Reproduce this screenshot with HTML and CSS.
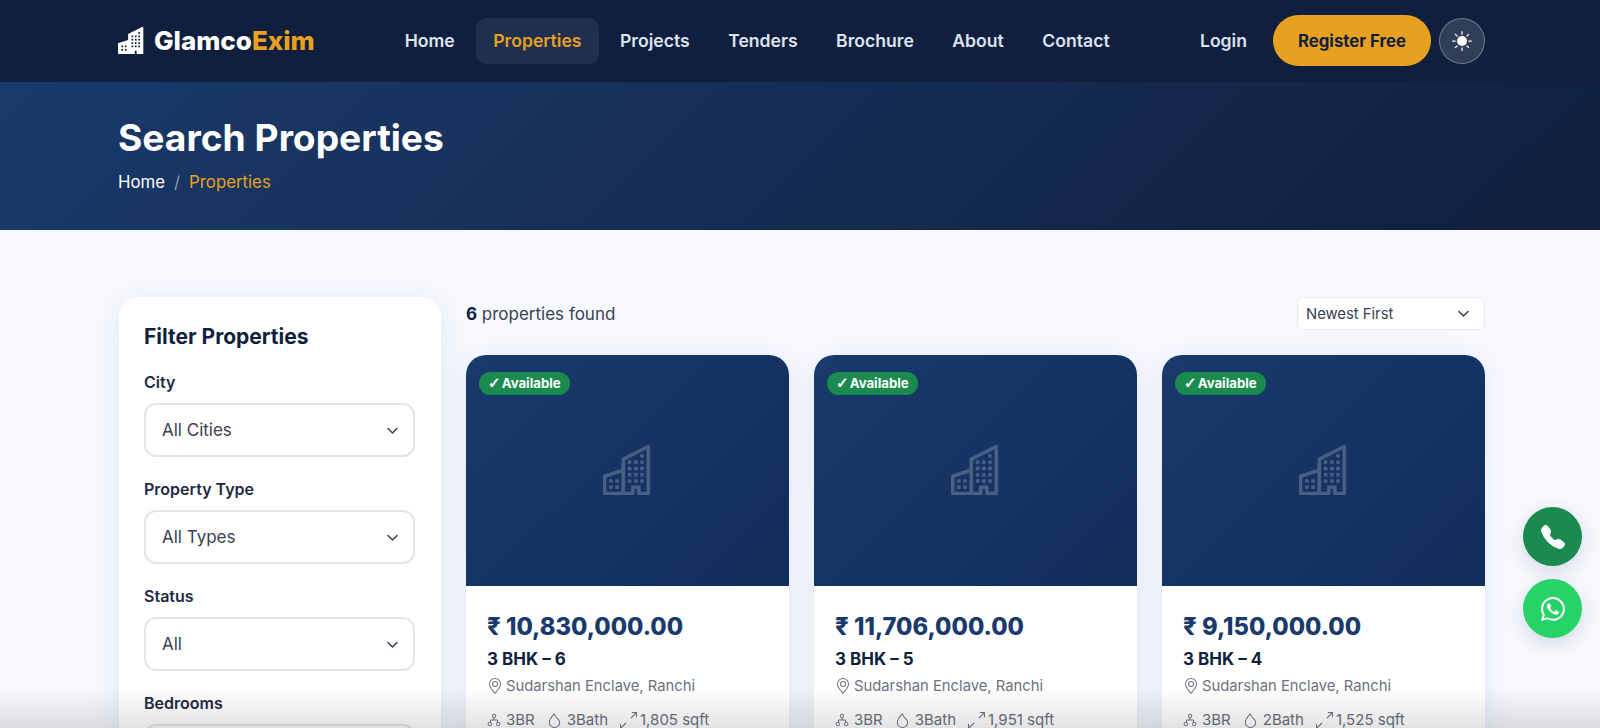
FILE: index.html
```html
<!DOCTYPE html>
<html lang="en">
<head>
    <meta charset="UTF-8">
    <meta name="viewport" content="width=device-width, initial-scale=1.0">
    <title>Search Properties - GlamcoExim</title>
    <link rel="stylesheet" href="styles.css">
</head>
<body>
    <svg class="sprites" width="0" height="0">
        <symbol id="buildings" viewBox="0 0 16 16">
            <path d="M14.763.075A.5.5 0 0 1 15 .5v15a.5.5 0 0 1-.5.5h-3a.5.5 0 0 1-.5-.5V14h-1v1.5a.5.5 0 0 1-.5.5h-9a.5.5 0 0 1-.5-.5V10a.5.5 0 0 1 .342-.474L6 7.64V4.5a.5.5 0 0 1 .276-.447l8-4a.5.5 0 0 1 .487.022ZM6 8.694 1 10.36V15h5V8.694ZM7 15h2v-1.5a.5.5 0 0 1 .5-.5h2a.5.5 0 0 1 .5.5V15h2V1.309l-7 3.5V15Z"/>
            <path d="M2 11h1v1H2v-1Zm2 0h1v1H4v-1Zm-2 2h1v1H2v-1Zm2 0h1v1H4v-1Zm4-4h1v1H8V9Zm2 0h1v1h-1V9Zm-2 2h1v1H8v-1Zm2 0h1v1h-1v-1Zm2-2h1v1h-1V9Zm0 2h1v1h-1v-1ZM8 7h1v1H8V7Zm2 0h1v1h-1V7Zm2 0h1v1h-1V7ZM8 5h1v1H8V5Zm2 0h1v1h-1V5Zm2 0h1v1h-1V5Zm0-2h1v1h-1V3Z"/>
        </symbol>
        <symbol id="chevron" viewBox="0 0 16 16">
            <path d="M2.5 5.5 8 11l5.5-5.5" fill="none" stroke="currentColor" stroke-width="1.8" stroke-linecap="round" stroke-linejoin="round"/>
        </symbol>
        <symbol id="pin" viewBox="0 0 16 16">
            <path d="M12.166 8.94c-.524 1.062-1.234 2.12-1.96 3.07A31.493 31.493 0 0 1 8 14.58a31.481 31.481 0 0 1-2.206-2.57c-.726-.95-1.436-2.008-1.96-3.07C3.304 7.867 3 6.862 3 6a5 5 0 0 1 10 0c0 .862-.305 1.867-.834 2.94zM8 16s6-5.686 6-10A6 6 0 0 0 2 6c0 4.314 6 10 6 10z"/>
            <path d="M8 8a2 2 0 1 1 0-4 2 2 0 0 1 0 4zm0 1a3 3 0 1 0 0-6 3 3 0 0 0 0 6z"/>
        </symbol>
        <symbol id="rooms" viewBox="0 0 16 16">
            <g fill="none" stroke="currentColor" stroke-width="1.1">
                <circle cx="8" cy="3.4" r="2"/>
                <circle cx="3.2" cy="12.6" r="2"/>
                <circle cx="12.8" cy="12.6" r="2"/>
                <path d="M8 5.4V8M4 10.7V8h8v2.7"/>
            </g>
        </symbol>
        <symbol id="droplet" viewBox="0 0 16 16">
            <path fill-rule="evenodd" d="M7.21.8C7.69.295 8 0 8 0c.109.363.234.708.371 1.038.812 1.946 2.073 3.35 3.197 4.6C12.878 7.096 14 8.345 14 10a6 6 0 0 1-12 0C2 6.668 5.58 2.517 7.21.8zm.413 1.021A31.25 31.25 0 0 0 5.794 3.99c-.726.95-1.436 2.008-1.96 3.07C3.304 8.133 3 9.138 3 10a5 5 0 0 0 10 0c0-1.201-.796-2.157-2.181-3.7l-.03-.032C9.75 5.11 8.5 3.72 7.623 1.82z"/>
        </symbol>
        <symbol id="expand" viewBox="0 0 16 16">
            <path fill-rule="evenodd" d="M5.828 10.172a.5.5 0 0 0-.707 0l-4.096 4.096V11.5a.5.5 0 0 0-1 0v3.975a.5.5 0 0 0 .5.5H4.5a.5.5 0 0 0 0-1H1.732l4.096-4.096a.5.5 0 0 0 0-.707zm4.344-4.344a.5.5 0 0 0 .707 0l4.096-4.096V4.5a.5.5 0 1 0 1 0V.525a.5.5 0 0 0-.5-.5H11.5a.5.5 0 0 0 0 1h2.768l-4.096 4.096a.5.5 0 0 0 0 .707z"/>
        </symbol>
    </svg>

    <header class="navbar">
        <a class="brand" href="#">
            <svg class="brand-icon" viewBox="0 0 16 16" fill="currentColor"><path d="M15 .5a.5.5 0 0 0-.724-.447l-8 4A.5.5 0 0 0 6 4.5v3.14L.342 9.526A.5.5 0 0 0 0 10v5.5a.5.5 0 0 0 .5.5h9a.5.5 0 0 0 .5-.5V14h1v1.5a.5.5 0 0 0 .5.5h3a.5.5 0 0 0 .5-.5V.5ZM2 11h1v1H2v-1Zm2 0h1v1H4v-1Zm-1 2v1H2v-1h1Zm1 0h1v1H4v-1Zm9-10v1h-1V3h1ZM8 5h1v1H8V5Zm1 2v1H8V7h1ZM8 9h1v1H8V9Zm2 0h1v1h-1V9Zm-1 2v1H8v-1h1Zm1 0h1v1h-1v-1Zm3-2v1h-1V9h1Zm-1 2h1v1h-1v-1Zm-2-4h1v1h-1V7Zm3 0v1h-1V7h1Zm-2-2v1h-1V5h1Zm1 0h1v1h-1V5Z"/></svg>
            <span>Glamco<em>Exim</em></span>
        </a>
        <nav class="nav-links">
            <a href="#">Home</a>
            <a href="#" class="active">Properties</a>
            <a href="#">Projects</a>
            <a href="#">Tenders</a>
            <a href="#">Brochure</a>
            <a href="#">About</a>
            <a href="#">Contact</a>
        </nav>
        <div class="nav-actions">
            <a href="#" class="login">Login</a>
            <a href="#" class="register">Register Free</a>
            <button class="theme-toggle" aria-label="Toggle theme">
                <svg viewBox="0 0 16 16" fill="currentColor"><path d="M8 12a4 4 0 1 0 0-8 4 4 0 0 0 0 8zM8 0a.5.5 0 0 1 .5.5v2a.5.5 0 0 1-1 0v-2A.5.5 0 0 1 8 0zm0 13a.5.5 0 0 1 .5.5v2a.5.5 0 0 1-1 0v-2A.5.5 0 0 1 8 13zm8-5a.5.5 0 0 1-.5.5h-2a.5.5 0 0 1 0-1h2a.5.5 0 0 1 .5.5zM3 8a.5.5 0 0 1-.5.5h-2a.5.5 0 0 1 0-1h2A.5.5 0 0 1 3 8zm10.657-5.657a.5.5 0 0 1 0 .707l-1.414 1.415a.5.5 0 1 1-.707-.708l1.414-1.414a.5.5 0 0 1 .707 0zm-9.193 9.193a.5.5 0 0 1 0 .707L3.05 13.657a.5.5 0 0 1-.707-.707l1.414-1.414a.5.5 0 0 1 .707 0zm9.193 2.121a.5.5 0 0 1-.707 0l-1.414-1.414a.5.5 0 0 1 .707-.707l1.414 1.414a.5.5 0 0 1 0 .707zM4.464 4.465a.5.5 0 0 1-.707 0L2.343 3.05a.5.5 0 1 1 .707-.707l1.414 1.414a.5.5 0 0 1 0 .708z"/></svg>
            </button>
        </div>
    </header>

    <section class="hero">
        <h1>Search Properties</h1>
        <div class="breadcrumb">
            <a href="#">Home</a>
            <span class="sep">/</span>
            <span class="current">Properties</span>
        </div>
    </section>

    <main class="content">
        <aside class="filters">
            <h2>Filter Properties</h2>
            <div class="field">
                <label>City</label>
                <div class="select">All Cities <svg><use href="#chevron"/></svg></div>
            </div>
            <div class="field">
                <label>Property Type</label>
                <div class="select">All Types <svg><use href="#chevron"/></svg></div>
            </div>
            <div class="field">
                <label>Status</label>
                <div class="select">All <svg><use href="#chevron"/></svg></div>
            </div>
            <div class="field">
                <label>Bedrooms</label>
                <div class="select"></div>
            </div>
        </aside>

        <section class="results">
            <div class="results-head">
                <p><strong>6</strong> properties found</p>
                <div class="sort">Newest First <svg><use href="#chevron"/></svg></div>
            </div>
            <div class="cards">
                <article class="card">
                    <div class="card-img">
                        <span class="badge"><span class="check">✓</span> Available</span>
                        <svg class="card-icon"><use href="#buildings"/></svg>
                    </div>
                    <div class="card-body">
                        <div class="price">₹ 10,830,000.00</div>
                        <h3>3 BHK – 6</h3>
                        <div class="location"><svg><use href="#pin"/></svg>Sudarshan Enclave, Ranchi</div>
                        <div class="meta">
                            <span><svg class="ic-rooms"><use href="#rooms"/></svg>3BR</span>
                            <span><svg class="ic-bath"><use href="#droplet"/></svg>3Bath</span>
                            <span><svg class="ic-area"><use href="#expand"/></svg>1,805 sqft</span>
                        </div>
                    </div>
                </article>
                <article class="card">
                    <div class="card-img">
                        <span class="badge"><span class="check">✓</span> Available</span>
                        <svg class="card-icon"><use href="#buildings"/></svg>
                    </div>
                    <div class="card-body">
                        <div class="price">₹ 11,706,000.00</div>
                        <h3>3 BHK – 5</h3>
                        <div class="location"><svg><use href="#pin"/></svg>Sudarshan Enclave, Ranchi</div>
                        <div class="meta">
                            <span><svg class="ic-rooms"><use href="#rooms"/></svg>3BR</span>
                            <span><svg class="ic-bath"><use href="#droplet"/></svg>3Bath</span>
                            <span><svg class="ic-area"><use href="#expand"/></svg>1,951 sqft</span>
                        </div>
                    </div>
                </article>
                <article class="card">
                    <div class="card-img">
                        <span class="badge"><span class="check">✓</span> Available</span>
                        <svg class="card-icon"><use href="#buildings"/></svg>
                    </div>
                    <div class="card-body">
                        <div class="price">₹ 9,150,000.00</div>
                        <h3>3 BHK – 4</h3>
                        <div class="location"><svg><use href="#pin"/></svg>Sudarshan Enclave, Ranchi</div>
                        <div class="meta">
                            <span><svg class="ic-rooms"><use href="#rooms"/></svg>3BR</span>
                            <span><svg class="ic-bath"><use href="#droplet"/></svg>2Bath</span>
                            <span><svg class="ic-area"><use href="#expand"/></svg>1,525 sqft</span>
                        </div>
                    </div>
                </article>
            </div>
        </section>
    </main>

    <div class="fabs">
        <a href="#" class="fab fab-call" aria-label="Call">
            <svg viewBox="0 0 16 16" fill="currentColor"><path fill-rule="evenodd" d="M1.885.511a1.745 1.745 0 0 1 2.61.163L6.29 2.98c.329.423.445.974.315 1.494l-.547 2.19a.678.678 0 0 0 .178.643l2.457 2.457a.678.678 0 0 0 .644.178l2.189-.547a1.745 1.745 0 0 1 1.494.315l2.306 1.794c.829.645.905 1.87.163 2.611l-1.034 1.034c-.74.74-1.846 1.065-2.877.702a18.634 18.634 0 0 1-7.01-4.42 18.634 18.634 0 0 1-4.42-7.009c-.362-1.03-.037-2.137.703-2.877L1.885.511z"/></svg>
        </a>
        <a href="#" class="fab fab-whatsapp" aria-label="WhatsApp">
            <svg viewBox="0 0 16 16" fill="currentColor"><path d="M13.601 2.326A7.854 7.854 0 0 0 7.994 0C3.627 0 .068 3.558.064 7.926c0 1.399.366 2.76 1.057 3.965L0 16l4.204-1.102a7.933 7.933 0 0 0 3.79.965h.004c4.368 0 7.926-3.558 7.93-7.93A7.898 7.898 0 0 0 13.6 2.326zM7.994 14.521a6.573 6.573 0 0 1-3.356-.92l-.24-.144-2.494.654.666-2.433-.156-.251a6.56 6.56 0 0 1-1.007-3.505c0-3.626 2.957-6.584 6.591-6.584a6.56 6.56 0 0 1 4.66 1.931 6.557 6.557 0 0 1 1.928 4.66c-.004 3.639-2.961 6.592-6.592 6.592zm3.615-4.934c-.197-.099-1.17-.578-1.353-.646-.182-.065-.315-.099-.445.099-.133.197-.513.646-.627.775-.114.133-.232.148-.43.05-.197-.1-.836-.308-1.592-.985-.59-.525-.985-1.175-1.103-1.372-.114-.198-.011-.304.088-.403.087-.088.197-.232.296-.346.1-.114.133-.198.198-.33.065-.134.034-.248-.015-.347-.05-.099-.445-1.076-.612-1.47-.16-.389-.323-.335-.445-.34-.114-.007-.247-.007-.38-.007a.729.729 0 0 0-.529.247c-.182.198-.691.677-.691 1.654 0 .977.71 1.916.81 2.049.098.133 1.394 2.132 3.383 2.992.47.205.84.326 1.129.418.475.152.904.129 1.246.08.38-.058 1.171-.48 1.338-.943.164-.464.164-.86.114-.943-.049-.084-.182-.133-.38-.232z"/></svg>
        </a>
    </div>

    <div class="bottom-fade"></div>
</body>
</html>
```

FILE: styles.css
```css
* {
    box-sizing: border-box;
}
html, body {
    height: 100%;
    overflow: hidden;
}
body {
    margin: 0;
    background: #f8f9ff;
    color: #0f1f3d;
    font-family: Inter, "Noto Sans", sans-serif;
}
a {
    color: inherit;
    text-decoration: none;
}
svg {
    display: block;
}
.sprites {
    position: absolute;
}

/* navbar */
.navbar {
    display: flex;
    align-items: center;
    height: 82px;
    padding: 0 115px 0 118px;
    background: #0f1f3d;
    position: relative;
    z-index: 2;
}
.brand {
    display: flex;
    align-items: center;
    gap: 9px;
    margin-top: -2px;
    color: #fff;
    font-size: 26px;
    font-weight: 800;
}
.brand em {
    color: #e8a020;
    font-style: normal;
}
.brand-icon {
    width: 27px;
    height: 27px;
}
.nav-links {
    display: flex;
    gap: 4.5px;
    margin-left: 73px;
}
.nav-links a {
    padding: 13px 17px;
    border-radius: 10px;
    color: #dde3f0;
    font-size: 17.6px;
    font-weight: 600;
    line-height: 20px;
}
.nav-links a.active {
    background: #1f2f4d;
    color: #e8a020;
}
.nav-actions {
    display: flex;
    align-items: center;
    margin-left: auto;
}
.login {
    margin-right: 26px;
    margin-top: -1px;
    color: #dde3f0;
    font-size: 17.6px;
    font-weight: 600;
}
.register {
    display: flex;
    align-items: center;
    justify-content: center;
    width: 158px;
    height: 51px;
    margin-right: 8px;
    margin-top: -1px;
    border-radius: 26px;
    background: #e8a020;
    color: #0f1f3d;
    font-size: 16.8px;
    font-weight: 700;
}
.theme-toggle {
    display: flex;
    align-items: center;
    justify-content: center;
    width: 46px;
    height: 46px;
    padding: 0;
    border: 1.5px solid rgba(255, 255, 255, 0.3);
    border-radius: 50%;
    background: rgba(255, 255, 255, 0.14);
    color: #fff;
}
.theme-toggle svg {
    width: 20px;
    height: 20px;
}

/* page header */
.hero {
    height: 148px;
    padding: 34px 118px 0;
    background: linear-gradient(135deg, #1a3a6b 0%, #0f1f3d 100%);
    color: #fff;
}
.hero h1 {
    margin: 0 0 11px;
    font-size: 37.2px;
    font-weight: 700;
    line-height: 44px;
}
.breadcrumb {
    display: flex;
    gap: 9px;
    font-size: 16.8px;
    line-height: 22px;
}
.breadcrumb .sep {
    color: rgba(255, 255, 255, 0.5);
}
.breadcrumb .current {
    color: #e8a020;
}

/* filters + results */
.content {
    display: flex;
    align-items: flex-start;
    gap: 25px;
    padding: 67px 115px 0 119px;
}
.filters {
    flex: 0 0 322px;
    padding: 26px 26px 24px 25px;
    border-radius: 20px;
    background: #fff;
    box-shadow: 0 4px 30px rgba(26, 58, 107, 0.09);
}
.filters h2 {
    margin: 0 0 20px;
    font-size: 21px;
    font-weight: 700;
    line-height: 28px;
}
.field {
    margin-bottom: 21px;
}
.field label {
    display: block;
    margin-bottom: 10px;
    font-size: 16px;
    font-weight: 600;
    line-height: 22px;
    color: #1f2a44;
}
.select {
    display: flex;
    align-items: center;
    justify-content: space-between;
    height: 54px;
    padding: 0 14px 0 16px;
    border: 2px solid #dfe5e9;
    border-radius: 12px;
    background: #fff;
    color: #374151;
    font-size: 17px;
}
.select svg, .sort svg {
    width: 13px;
    height: 13px;
    color: #374151;
}
.results {
    flex: 1;
    min-width: 0;
}
.results-head {
    display: flex;
    align-items: center;
    justify-content: space-between;
    height: 33px;
    margin-bottom: 25px;
}
.results-head p {
    margin: 0;
    color: #374151;
    font-size: 17px;
}
.results-head strong {
    color: #0f1f3d;
}
.sort {
    display: flex;
    align-items: center;
    justify-content: space-between;
    width: 188px;
    height: 33px;
    padding: 0 14px 0 8px;
    border: 1px solid #e8eaf0;
    border-radius: 6px;
    background: #fff;
    color: #374151;
    font-size: 14.8px;
}

/* property cards */
.cards {
    display: grid;
    grid-template-columns: repeat(3, 1fr);
    gap: 25px;
}
.card {
    border-radius: 20px;
    background: #fff;
    box-shadow: 0 4px 30px rgba(26, 58, 107, 0.09);
    overflow: hidden;
}
.card-img {
    display: flex;
    align-items: center;
    justify-content: center;
    position: relative;
    height: 231px;
    background: linear-gradient(135deg, #1a3a6b 0%, #102d5c 100%);
}
.card-icon {
    width: 50px;
    height: 50px;
    margin-top: -1px;
    fill: #fff;
    stroke: #fff;
    stroke-width: 0.15;
    opacity: 0.22;
}
.badge {
    position: absolute;
    top: 17px;
    left: 13px;
    padding: 0 9px;
    border-radius: 12px;
    background: #1a8a4f;
    color: #fff;
    font-size: 13.2px;
    font-weight: 700;
    line-height: 23px;
    white-space: nowrap;
}
.check {
    font-family: "DejaVu Sans", sans-serif;
    font-size: 15px;
    line-height: 1;
    margin-right: -2px;
    -webkit-text-stroke: 0.5px #fff;
}
.card-body {
    padding: 25px 21px;
}
.price {
    color: #1a3a6b;
    font-size: 23.7px;
    font-weight: 800;
    line-height: 32px;
}
.card-body h3 {
    margin: 4px 0 4px;
    font-size: 17px;
    font-weight: 700;
    line-height: 24px;
}
.location {
    display: flex;
    align-items: center;
    gap: 3px;
    color: #6b7280;
    font-size: 14.8px;
    line-height: 22px;
}
.location svg {
    width: 16px;
    height: 16px;
    fill: currentColor;
}
.meta {
    display: flex;
    gap: 12px;
    margin-top: 12px;
    color: #6b7280;
    font-size: 15px;
    line-height: 22px;
}
.meta span {
    display: flex;
    align-items: center;
    gap: 5px;
}
.meta svg {
    fill: currentColor;
}
.ic-rooms {
    width: 14px;
    height: 14px;
}
.ic-bath {
    width: 15px;
    height: 15px;
}
.ic-area {
    width: 17px;
    height: 17px;
    margin-right: -2px;
}

/* floating buttons */
.fabs {
    position: fixed;
    right: 18px;
    bottom: 90px;
    display: flex;
    flex-direction: column;
    gap: 13px;
    z-index: 5;
}
.fab {
    display: flex;
    align-items: center;
    justify-content: center;
    width: 59px;
    height: 59px;
    border-radius: 50%;
    color: #fff;
    box-shadow: 0 6px 20px rgba(15, 31, 61, 0.15);
}
.fab svg {
    width: 24px;
    height: 24px;
}
.fab-call {
    background: #1a8a4f;
}
.fab-whatsapp {
    background: #25d366;
}

/* shadow strip at the bottom of the window */
.bottom-fade {
    position: fixed;
    left: 0;
    right: 0;
    bottom: 0;
    height: 40px;
    background: linear-gradient(to bottom, rgba(0, 0, 0, 0), rgba(0, 0, 0, 0.11));
    pointer-events: none;
    z-index: 4;
}
```
